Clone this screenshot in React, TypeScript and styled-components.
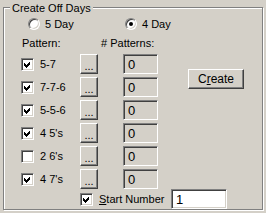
import styled, { createGlobalStyle } from 'styled-components';

const GlobalStyle = createGlobalStyle`
  html, body {
    margin: 0;
    padding: 0;
    background: #d4d0c8;
  }
  body {
    font-family: "Liberation Sans", Arial, sans-serif;
    font-size: 11px;
    color: #000;
  }
`;

const patterns = [
  { label: '5-7', checked: true },
  { label: '7-7-6', checked: true },
  { label: '5-5-6', checked: true },
  { label: "4 5's", checked: true },
  { label: "2 6's", checked: false },
  { label: "4 7's", checked: true },
];

function Check({ checked }: { checked: boolean }) {
  return (
    <CheckBox>
      {checked && (
        <svg width="9" height="9" viewBox="0 0 9 9" shapeRendering="crispEdges">
          <path d="M1 3 L3 5 L7 1 L7 4 L3 8 L1 6 Z" fill="#000" />
        </svg>
      )}
    </CheckBox>
  );
}

export default function App() {
  return (
    <>
      <GlobalStyle />
      <Window>
        <Group>
          <GroupTitle>Create Off Days</GroupTitle>
          <RadioRow>
            <RadioItem $width={97}>
              <Radio />
              <span>5 Day</span>
            </RadioItem>
            <RadioItem>
              <Radio $checked />
              <span>4 Day</span>
            </RadioItem>
          </RadioRow>
          <HeaderRow>
            <HeaderCell $width={79}>Pattern:</HeaderCell>
            <HeaderCell># Patterns:</HeaderCell>
          </HeaderRow>
          <Body>
            <Rows>
              {patterns.map((p) => (
                <PatternRow key={p.label}>
                  <CheckCell>
                    <Check checked={p.checked} />
                    <span>{p.label}</span>
                  </CheckCell>
                  <DotsButton>...</DotsButton>
                  <Field $disabled>0</Field>
                </PatternRow>
              ))}
            </Rows>
            <CreateButton>
              C<u>r</u>eate
            </CreateButton>
          </Body>
          <StartRow>
            <CheckCell $width={91}>
              <Check checked />
              <span>
                <u>S</u>tart Number
              </span>
            </CheckCell>
            <Field $width={56}>1</Field>
          </StartRow>
        </Group>
      </Window>
    </>
  );
}

const Window = styled.div`
  width: 266px;
  height: 213px;
  padding: 7px 0 0 3px;
  box-sizing: border-box;
`;

const Group = styled.div`
  position: relative;
  width: 260px;
  height: 203px;
  box-sizing: border-box;
  border: 1px solid #808080;
  box-shadow: 1px 1px 0 #fff, inset 1px 1px 0 #fff;
  display: flex;
  flex-direction: column;
`;

const GroupTitle = styled.span`
  position: absolute;
  top: -6px;
  left: 6px;
  padding: 0 2px;
  line-height: 13px;
  background: #d4d0c8;
`;

const RadioRow = styled.div`
  display: flex;
  align-items: center;
  height: 12px;
  margin: 10px 0 0 24px;
`;

const RadioItem = styled.div<{ $width?: number }>`
  display: flex;
  align-items: center;
  gap: 5px;
  width: ${(p) => (p.$width ? `${p.$width}px` : 'auto')};
  line-height: 13px;
`;

const Radio = styled.span<{ $checked?: boolean }>`
  position: relative;
  width: 12px;
  height: 12px;
  box-sizing: border-box;
  border-radius: 50%;
  background: #fff;
  border: 1px solid;
  border-color: #808080 #fff #fff #808080;
  box-shadow: inset 1px 1px 0 #404040, inset -1px -1px 0 #d4d0c8;

  &::after {
    content: '';
    display: ${(p) => (p.$checked ? 'block' : 'none')};
    position: absolute;
    left: 3px;
    top: 3px;
    width: 4px;
    height: 4px;
    border-radius: 50%;
    background: #000;
  }
`;

const HeaderRow = styled.div`
  display: flex;
  height: 13px;
  line-height: 13px;
  margin: 7px 0 0 18px;
`;

const HeaderCell = styled.span<{ $width?: number }>`
  width: ${(p) => (p.$width ? `${p.$width}px` : 'auto')};
`;

const Body = styled.div`
  display: flex;
  margin: 4px 0 0 17px;
`;

const Rows = styled.div`
  display: flex;
  flex-direction: column;
  gap: 3px;
`;

const PatternRow = styled.div`
  display: flex;
  align-items: center;
  height: 20px;
`;

const CheckCell = styled.label<{ $width?: number }>`
  display: flex;
  align-items: center;
  gap: 6px;
  width: ${(p) => p.$width ?? 59}px;
  line-height: 13px;
`;

const CheckBox = styled.span`
  display: flex;
  align-items: center;
  justify-content: center;
  width: 13px;
  height: 13px;
  box-sizing: border-box;
  flex: none;
  background: #fff;
  border: 1px solid;
  border-color: #808080 #fff #fff #808080;
  box-shadow: inset 1px 1px 0 #404040, inset -1px -1px 0 #d4d0c8;
`;

const RaisedButton = styled.button`
  box-sizing: border-box;
  padding: 0;
  margin: 0;
  font: inherit;
  color: #000;
  background: #d4d0c8;
  border: 1px solid;
  border-color: #fff #404040 #404040 #fff;
  box-shadow: inset -1px -1px 0 #808080;
`;

const DotsButton = styled(RaisedButton)`
  width: 18px;
  height: 20px;
  line-height: 12px;
  padding-top: 4px;
`;

const CreateButton = styled(RaisedButton)`
  width: 56px;
  height: 20px;
  margin: 15px 0 0 30px;
  font-size: 12px;

  u {
    text-underline-offset: 1px;
  }
`;

const Field = styled.div<{ $disabled?: boolean; $width?: number }>`
  box-sizing: border-box;
  width: ${(p) => p.$width ?? 35}px;
  height: 20px;
  margin-left: ${(p) => (p.$disabled ? 25 : 0)}px;
  padding: 2px 0 0 4px;
  line-height: 16px;
  font-size: 13px;
  background: ${(p) => (p.$disabled ? '#d4d0c8' : '#fff')};
  border: 1px solid;
  border-color: #808080 #fff #fff #808080;
  box-shadow: inset 1px 1px 0 #404040, inset -1px -1px 0 #d4d0c8;
`;

const StartRow = styled.div`
  display: flex;
  align-items: center;
  margin: 0 0 0 76px;
`;
